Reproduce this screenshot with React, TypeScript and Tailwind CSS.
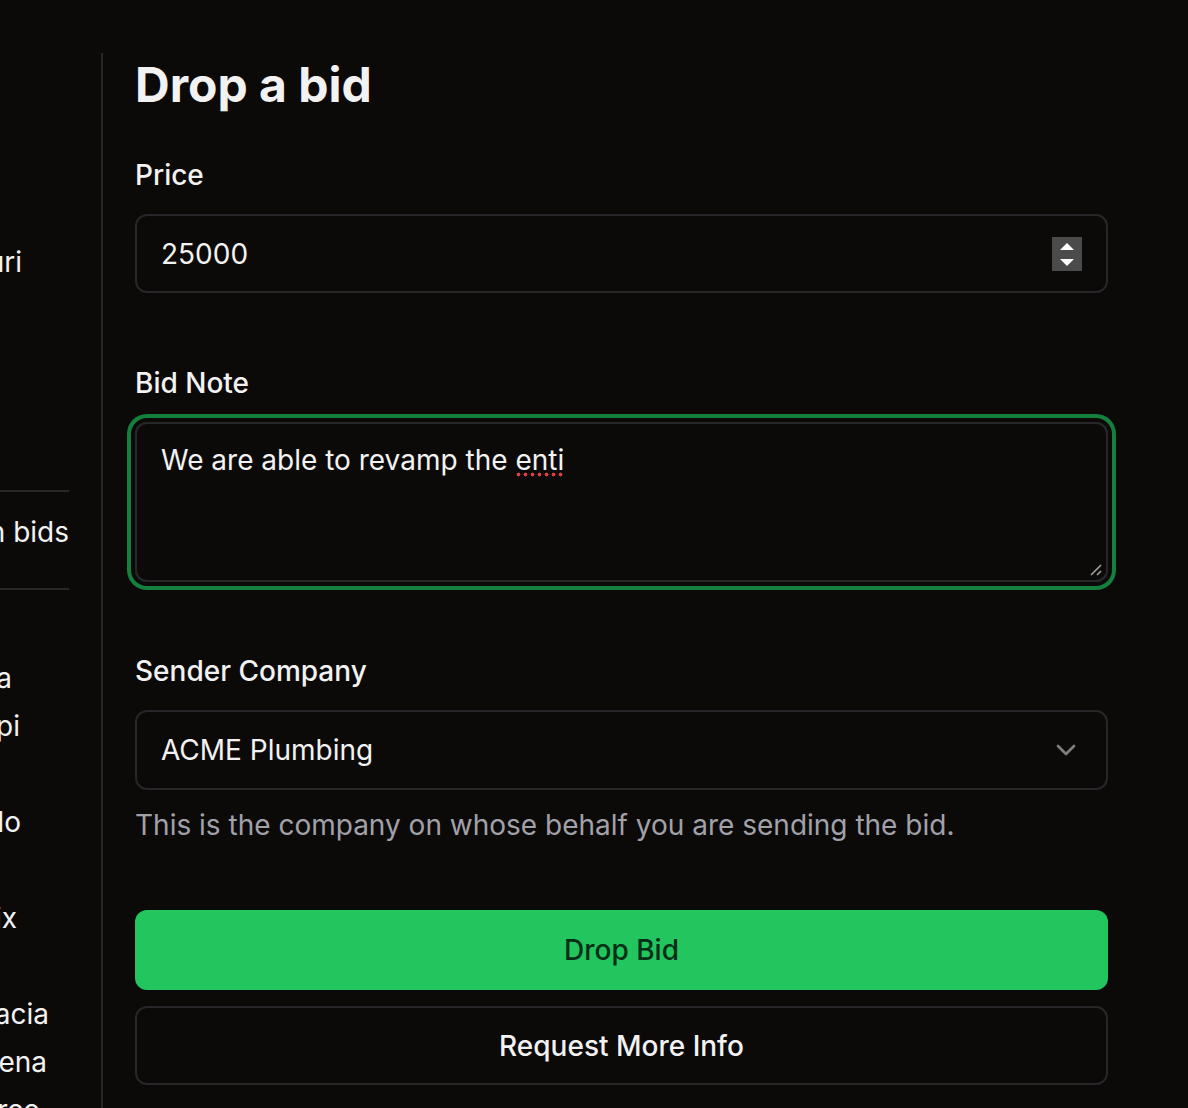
import { ChevronDown } from "lucide-react";

const sideRows: { text: string; pr: string }[] = [
  { text: "Florida", pr: "pr-[57px]" },
  { text: "Mississippi", pr: "pr-[49px]" },
  { text: "", pr: "" },
  { text: "Colorado", pr: "pr-[48px]" },
  { text: "", pr: "" },
  { text: "Phoenix", pr: "pr-[52px]" },
  { text: "", pr: "" },
  { text: "Acacia", pr: "pr-[20px]" },
  { text: "Pasadena", pr: "pr-[22px]" },
  { text: "Marco", pr: "pr-[29px]" },
];

const Sidebar = () => (
  <aside className="w-[103px] shrink-0 border-r-2 border-[#27272a] pr-[32px] overflow-hidden">
    <div className="flex flex-col text-[28px] leading-[48px] text-[#f2f2f2]">
      <div className="mt-[185px] h-[48px] whitespace-nowrap pr-[47px] overflow-hidden">
        <span className="float-right">Missouri</span>
      </div>
      <div className="mt-[204px] h-[2px] bg-[#27272a]" />
      <div className="mt-[16px] h-[48px] whitespace-nowrap overflow-hidden">
        <span className="float-right">Open bids</span>
      </div>
      <div className="mt-[32px] h-[2px] bg-[#27272a]" />
      <div className="mt-[64px] flex flex-col">
        {sideRows.map((r, i) => (
          <div key={i} className={`h-[48px] whitespace-nowrap overflow-hidden ${r.pr}`}>
            <span className="float-right">{r.text}</span>
          </div>
        ))}
      </div>
    </div>
  </aside>
);

const Spinner = () => (
  <svg width="30" height="34" viewBox="0 0 30 34">
    <rect width="30" height="34" fill="#4b4b4b" />
    <polygon points="8,13 22,13 15,6" fill="#fff" />
    <polygon points="8,22 22,22 15,29" fill="#fff" />
  </svg>
);

export default function App() {
  return (
    <div className="min-h-[1108px] bg-[#0c0a09] font-['Inter',sans-serif] text-[#f2f2f2] pt-[53px] flex overflow-hidden">
      <Sidebar />
      <main className="w-[1005px] pl-[32px] flex flex-col">
        <h1 className="text-[48px] leading-[64px] font-bold">Drop a bid</h1>

        <label className="mt-[38px] text-[28px] leading-[40px] font-medium">Price</label>
        <div className="mt-[19px] h-[79px] rounded-[12px] border-2 border-[#27272a] px-6 flex items-center">
          <span className="flex-1 text-[28px]">25000</span>
          <Spinner />
        </div>

        <label className="mt-[70px] text-[28px] leading-[40px] font-medium">Bid Note</label>
        <div className="relative mt-[19px] h-[160px] rounded-[12px] border-2 border-[#27272a] ring-4 ring-[#15803d] ring-offset-4 ring-offset-[#0c0a09] px-6 py-4">
          <p className="text-[28px] leading-[40px]">
            We are able to revamp the{" "}
            <span className="bg-[radial-gradient(circle,#dc3f3f_1.7px,transparent_2.2px)] bg-[length:7px_5px] bg-repeat-x bg-[position:0px_100%]">enti</span>
          </p>
          <svg className="absolute right-[3px] bottom-[3px]" width="14" height="14" viewBox="0 0 14 14">
            <line x1="2" y1="12" x2="12" y2="2" stroke="#a3a3a3" strokeWidth="1.6" />
            <line x1="8" y1="12" x2="12" y2="8" stroke="#a3a3a3" strokeWidth="1.6" />
          </svg>
        </div>

        <label className="mt-[69px] text-[28px] leading-[40px] font-medium">Sender Company</label>
        <div className="mt-[19px] h-[80px] rounded-[12px] border-2 border-[#27272a] px-6 flex items-center">
          <span className="flex-1 text-[28px]">ACME Plumbing</span>
          <ChevronDown size={32} strokeWidth={2} className="opacity-50" />
        </div>
        <p className="mt-[15px] text-[28px] leading-[40px] text-[#a1a1aa]">
          This is the company on whose behalf you are sending the bid.
        </p>

        <button className="mt-[65px] h-[80px] rounded-[12px] bg-[#22c55e] text-[28px] font-medium text-[#052e16]">
          Drop Bid
        </button>
        <button className="mt-[16px] h-[79px] rounded-[12px] border-2 border-[#27272a] text-[28px] font-medium text-[#f2f2f2]">
          Request More Info
        </button>
      </main>
    </div>
  );
}
